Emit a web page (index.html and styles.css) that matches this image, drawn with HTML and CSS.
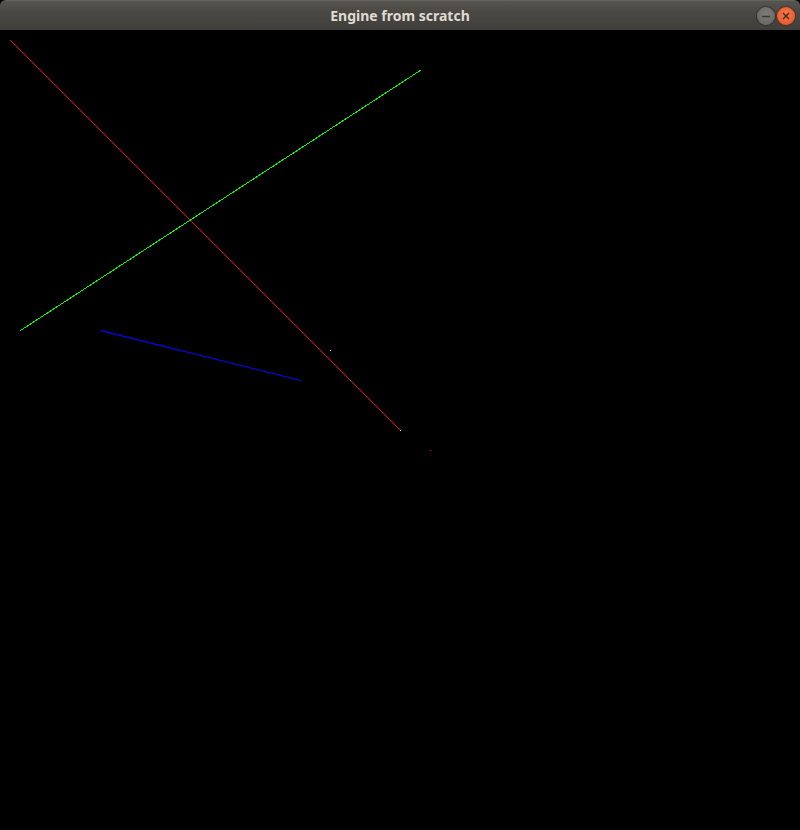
FILE: index.html
```html
<!DOCTYPE html>
<html>
<head>
<meta charset="utf-8">
<link rel="stylesheet" href="styles.css">
</head>
<body>
<div class="window">
  <div class="titlebar">
    <div class="side"></div>
    <div class="title">Engine from scratch</div>
    <div class="side controls">
      <span class="btn min"><svg width="18" height="18" viewBox="0 0 18 18"><line x1="5" y1="9.5" x2="13" y2="9.5" stroke="#3a3935" stroke-width="1.5"/></svg></span>
      <span class="btn close"><svg width="18" height="18" viewBox="0 0 18 18"><path d="M6 6 L12 12 M12 6 L6 12" stroke="#3a2a20" stroke-width="1.4"/></svg></span>
    </div>
  </div>
  <div class="canvas">
    <svg class="scene" width="800" height="800" viewBox="0 0 800 800" shape-rendering="crispEdges">
      <line x1="10.5" y1="10.5" x2="400.5" y2="400.5" stroke="#ff0000" stroke-width="1"/>
      <line x1="20.5" y1="300.5" x2="421" y2="40" stroke="#00ff00" stroke-width="1"/>
      <line x1="100.5" y1="300.5" x2="301" y2="350.6" stroke="#0000ff" stroke-width="1"/>
      <rect x="400" y="400" width="1" height="1" fill="#ffffff"/>
      <rect x="330" y="320" width="1" height="1" fill="#ffffff"/>
      <rect x="350" y="350" width="1" height="1" fill="#00ff00"/>
      <rect x="430" y="420" width="1" height="1" fill="#ff0000"/>
    </svg>
  </div>
</div>
</body>
</html>
```
FILE: styles.css
```css
html, body {
  margin: 0;
  padding: 0;
  background: #000;
}
.window {
  width: 800px;
  height: 830px;
  display: flex;
  flex-direction: column;
  background: #000;
}
.titlebar {
  height: 30px;
  display: grid;
  grid-template-columns: 1fr auto 1fr;
  align-items: center;
  background: linear-gradient(#57554f, #4a4843 40%, #3f3e3a);
  border-top: 1px solid #65635d;
  border-radius: 6px 6px 0 0;
  box-sizing: border-box;
}
.title {
  font-family: "Noto Sans", "DejaVu Sans", sans-serif;
  font-weight: bold;
  font-size: 14px;
  color: #dfdbd2;
}
.controls {
  display: flex;
  justify-content: flex-end;
  gap: 2px;
  padding-right: 5px;
}
.btn {
  width: 18px;
  height: 18px;
  border-radius: 50%;
  display: block;
}
.btn svg {
  display: block;
}
.min {
  background: radial-gradient(circle at 50% 40%, #7e7d78, #62615c);
  box-shadow: 0 0 0 1px #33322e;
}
.close {
  background: radial-gradient(circle at 50% 40%, #f5794f, #e0501f);
  box-shadow: 0 0 0 1px #5a2f1c;
}
.canvas {
  width: 800px;
  height: 800px;
  background: #000;
}
.scene {
  display: block;
}
```
